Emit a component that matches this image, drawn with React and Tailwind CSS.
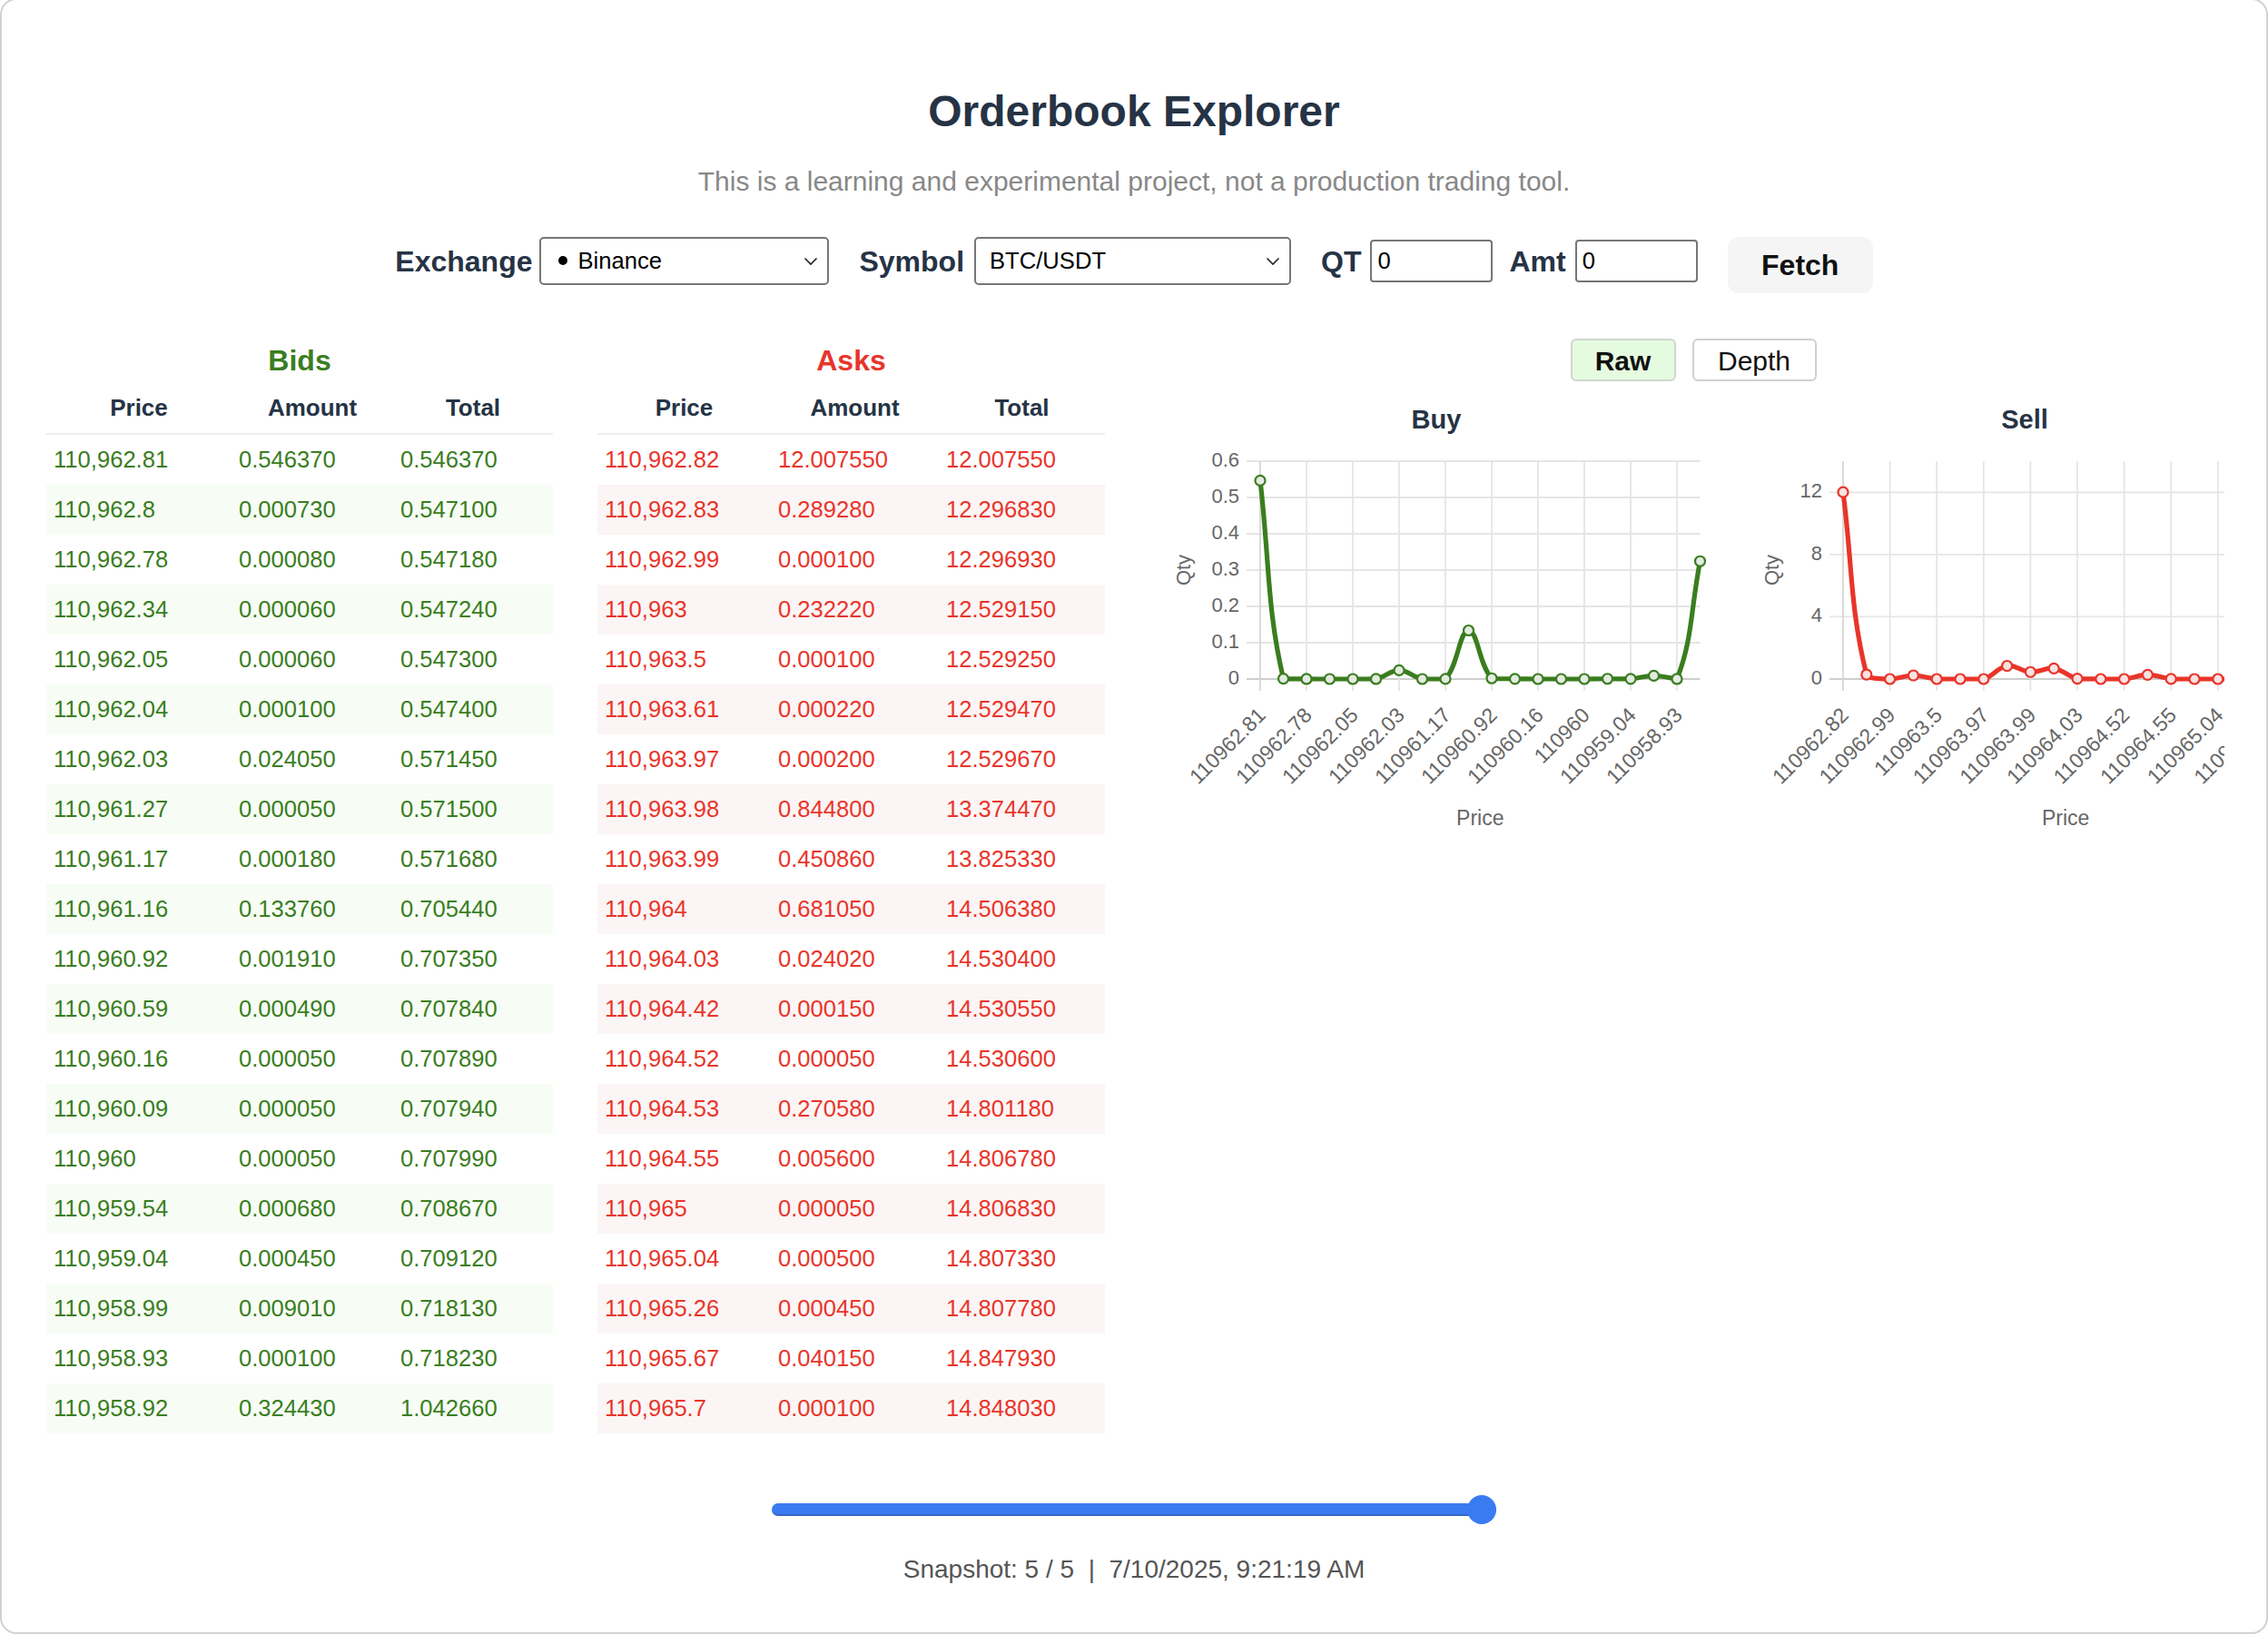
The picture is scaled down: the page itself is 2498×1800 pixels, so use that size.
import React from "react";

const bids = [
  ["110,962.81", "0.546370", "0.546370"],
  ["110,962.8", "0.000730", "0.547100"],
  ["110,962.78", "0.000080", "0.547180"],
  ["110,962.34", "0.000060", "0.547240"],
  ["110,962.05", "0.000060", "0.547300"],
  ["110,962.04", "0.000100", "0.547400"],
  ["110,962.03", "0.024050", "0.571450"],
  ["110,961.27", "0.000050", "0.571500"],
  ["110,961.17", "0.000180", "0.571680"],
  ["110,961.16", "0.133760", "0.705440"],
  ["110,960.92", "0.001910", "0.707350"],
  ["110,960.59", "0.000490", "0.707840"],
  ["110,960.16", "0.000050", "0.707890"],
  ["110,960.09", "0.000050", "0.707940"],
  ["110,960", "0.000050", "0.707990"],
  ["110,959.54", "0.000680", "0.708670"],
  ["110,959.04", "0.000450", "0.709120"],
  ["110,958.99", "0.009010", "0.718130"],
  ["110,958.93", "0.000100", "0.718230"],
  ["110,958.92", "0.324430", "1.042660"],
];

const asks = [
  ["110,962.82", "12.007550", "12.007550"],
  ["110,962.83", "0.289280", "12.296830"],
  ["110,962.99", "0.000100", "12.296930"],
  ["110,963", "0.232220", "12.529150"],
  ["110,963.5", "0.000100", "12.529250"],
  ["110,963.61", "0.000220", "12.529470"],
  ["110,963.97", "0.000200", "12.529670"],
  ["110,963.98", "0.844800", "13.374470"],
  ["110,963.99", "0.450860", "13.825330"],
  ["110,964", "0.681050", "14.506380"],
  ["110,964.03", "0.024020", "14.530400"],
  ["110,964.42", "0.000150", "14.530550"],
  ["110,964.52", "0.000050", "14.530600"],
  ["110,964.53", "0.270580", "14.801180"],
  ["110,964.55", "0.005600", "14.806780"],
  ["110,965", "0.000050", "14.806830"],
  ["110,965.04", "0.000500", "14.807330"],
  ["110,965.26", "0.000450", "14.807780"],
  ["110,965.67", "0.040150", "14.847930"],
  ["110,965.7", "0.000100", "14.848030"],
];

const bidCols = ["w-[204px]", "w-[178px]", "w-[176px]"];
const askCols = ["w-[191px]", "w-[185px]", "w-[183px]"];

function Book({ title, rows, cols, side }) {
  const isBid = side === "bid";
  const txt = isBid ? "text-[#3a7d22]" : "text-[#e8352b]";
  const tint = isBid ? "bg-[#f7fdf5]" : "bg-[#fcf5f5]";
  return (
    <div className="flex flex-col">
      <div className={`h-[49px] pb-[6px] flex items-center justify-center text-[32px] font-bold ${txt}`}>
        {title}
      </div>
      <div className="flex h-[55px] pb-[2px] items-center border-b-2 border-[#ededed] text-[26px] font-bold text-[#263345]">
        {["Price", "Amount", "Total"].map((h, i) => (
          <div key={h} className={`${cols[i]} text-center`}>
            {h}
          </div>
        ))}
      </div>
      {rows.map((r, ri) => (
        <div
          key={ri}
          className={`flex h-[55px] items-center text-[25.6px] ${txt} ${ri % 2 === 1 ? tint : "bg-white"}`}
        >
          {r.map((c, ci) => (
            <div key={ci} className={`${cols[ci]} pl-[8px]`}>
              {c}
            </div>
          ))}
        </div>
      ))}
    </div>
  );
}

function buildPath(pts, tension, top, bottom) {
  const clampY = (y) => Math.min(bottom, Math.max(top, y));
  const cps = pts.map((p, i) => {
    const prev = pts[i - 1] || p;
    const next = pts[i + 1] || p;
    const d01 = Math.hypot(p.x - prev.x, p.y - prev.y);
    const d12 = Math.hypot(next.x - p.x, next.y - p.y);
    let s01 = d01 / (d01 + d12);
    let s12 = d12 / (d01 + d12);
    if (!isFinite(s01)) s01 = 0;
    if (!isFinite(s12)) s12 = 0;
    const fa = tension * s01;
    const fb = tension * s12;
    return {
      px: p.x - fa * (next.x - prev.x),
      py: clampY(p.y - fa * (next.y - prev.y)),
      nx: p.x + fb * (next.x - prev.x),
      ny: clampY(p.y + fb * (next.y - prev.y)),
    };
  });
  let d = `M${pts[0].x},${pts[0].y}`;
  for (let i = 1; i < pts.length; i++) {
    d += ` C${cps[i - 1].nx},${cps[i - 1].ny} ${cps[i].px},${cps[i].py} ${pts[i].x},${pts[i].y}`;
  }
  return d;
}

function Chart({ title, values, labels, max, ticks, tickFmt, x0, dx, color, fill }) {
  const top = 27;
  const zero = 267;
  const h = 240;
  const y = (v) => zero - (v / max) * h;
  const pts = values.map((v, i) => ({ x: x0 + i * dx, y: y(v) }));
  const xEnd = x0 + (values.length - 1) * dx;
  const path = buildPath(pts, 0.4, top, zero);
  return (
    <div className="w-[584px] shrink-0 flex flex-col">
      <div className="h-[36px] flex items-center justify-center text-[29px] font-bold text-[#263345]">
        {title}
      </div>
      <svg width="584" height="440" className="block overflow-visible">
        {ticks.map((t) => (
          <line
            key={"h" + t}
            x1={x0 - 15}
            x2={xEnd}
            y1={y(t)}
            y2={y(t)}
            stroke={t === 0 ? "#cdcdcd" : "#e5e5e5"}
            strokeWidth="1.8"
          />
        ))}
        {values.map((_, i) =>
          i % 2 === 0 ? (
            <line
              key={"v" + i}
              x1={x0 + i * dx}
              x2={x0 + i * dx}
              y1={top}
              y2={zero + 13}
              stroke={i === 0 ? "#d6d6d6" : "#e5e5e5"}
              strokeWidth="1.8"
            />
          ) : null
        )}
        {ticks.map((t) => (
          <text
            key={"t" + t}
            x={x0 - 23}
            y={y(t)}
            textAnchor="end"
            dominantBaseline="middle"
            fontSize="22"
            fill="#666"
          >
            {tickFmt(t)}
          </text>
        ))}
        {values.map((_, i) =>
          i % 2 === 0 ? (
            <text
              key={"l" + i}
              transform={`translate(${x0 + i * dx + 3},${zero + 37}) rotate(-45)`}
              textAnchor="end"
              dominantBaseline="middle"
              fontSize="23"
              fill="#666"
            >
              {labels[i]}
            </text>
          ) : null
        )}
        <text
          transform={`translate(15,${(top + zero) / 2}) rotate(-90)`}
          textAnchor="middle"
          dominantBaseline="middle"
          fontSize="22"
          fill="#666"
        >
          Qty
        </text>
        <text
          x={(x0 + xEnd) / 2}
          y={422}
          textAnchor="middle"
          dominantBaseline="middle"
          fontSize="23"
          fill="#666"
        >
          Price
        </text>
        <path d={path} fill="none" stroke={color} strokeWidth="5.2" strokeLinejoin="round" />
        {pts.map((p, i) => (
          <circle key={"c" + i} cx={p.x} cy={p.y} r="5.5" fill={fill} stroke={color} strokeWidth="2.2" />
        ))}
      </svg>
    </div>
  );
}

function Chevron() {
  return (
    <svg width="16" height="10" viewBox="0 0 16 10" className="block">
      <path d="M1.5 1.5 L8 8 L14.5 1.5" fill="none" stroke="#222" strokeWidth="1.6" />
    </svg>
  );
}

export default function App() {
  const bidQty = bids.map((r) => parseFloat(r[1]));
  const askQty = asks.map((r) => parseFloat(r[1]));
  const bidLabels = bids.map((r) => r[0].replace(",", ""));
  const askLabels = asks.map((r) => r[0].replace(",", ""));
  return (
    <div className="w-[2498px] h-[1800px] overflow-hidden bg-white font-['Liberation_Sans',Arial,Helvetica,sans-serif] text-[#263345]">
      <div className="-mt-[2px] h-[1802px] rounded-[18px] border-2 border-[#d2d2d2] flex flex-col items-center">
        <div className="mt-[93px] h-[60px] flex items-center text-[48px] font-bold text-[#263345]">
          Orderbook Explorer
        </div>
        <div className="mt-[28px] h-[36px] flex items-center text-[30px] text-[#888888]">
          This is a learning and experimental project, not a production trading tool.
        </div>

        <div className="mt-[44px] flex items-start">
          <div className="h-[53px] flex items-center text-[32px] font-bold">Exchange</div>
          <div className="ml-[8px] w-[319px] h-[53px] border-2 border-[#767676] rounded-[5px] flex items-center justify-between pl-[19px] pr-[10px] text-[25.6px] text-black">
            <span className="flex items-center">
              <span className="inline-block w-[10px] h-[10px] rounded-full bg-black mr-[11px]" />
              Binance
            </span>
            <Chevron />
          </div>
          <div className="ml-[33px] h-[53px] flex items-center text-[32px] font-bold">Symbol</div>
          <div className="ml-[11px] w-[349px] h-[53px] border-2 border-[#767676] rounded-[5px] flex items-center justify-between pl-[15px] pr-[10px] text-[25.6px] text-black">
            <span>BTC/USDT</span>
            <Chevron />
          </div>
          <div className="ml-[33px] h-[53px] flex items-center text-[32px] font-bold">QT</div>
          <input
            readOnly
            defaultValue="0"
            className="ml-[10px] mt-[3px] w-[135px] h-[47px] border-2 border-[#767676] rounded-[4px] pl-[6px] text-[25.6px] text-black outline-none"
          />
          <div className="ml-[18px] h-[53px] flex items-center text-[32px] font-bold">Amt</div>
          <input
            readOnly
            defaultValue="0"
            className="ml-[10px] mt-[3px] w-[135px] h-[47px] border-2 border-[#767676] rounded-[4px] pl-[6px] text-[25.6px] text-black outline-none"
          />
          <button className="ml-[33px] w-[160px] h-[62px] rounded-[12px] bg-[#f5f5f5] text-[32px] font-bold text-[#111]">
            Fetch
          </button>
        </div>

        <div className="mt-[52px] w-full flex items-start pl-[49px]">
          <Book title="Bids" rows={bids} cols={bidCols} side="bid" />
          <div className="ml-[49px]">
            <Book title="Asks" rows={asks} cols={askCols} side="ask" />
          </div>
          <div className="ml-[33px] -mt-[2px] w-[1230px] flex flex-col">
            <div className="flex justify-center gap-[18px]">
              <button className="w-[116px] h-[47px] rounded-[6px] border-2 border-[#cfd6cc] bg-[#e5fbe0] text-[30px] font-bold text-[#111]">
                Raw
              </button>
              <button className="w-[137px] h-[47px] rounded-[6px] border-2 border-[#d0d0d0] bg-white text-[30px] text-[#111]">
                Depth
              </button>
            </div>
            <div className="mt-[25px] ml-[40px] w-[1160px] overflow-hidden flex gap-[64px]">
              <Chart
                title="Buy"
                values={bidQty}
                labels={bidLabels}
                max={0.6}
                ticks={[0, 0.1, 0.2, 0.3, 0.4, 0.5, 0.6]}
                tickFmt={(t) => (t === 0 ? "0" : t.toFixed(1))}
                x0={98}
                dx={25.5}
                color="#3a7d1f"
                fill="#e4eae1"
              />
              <Chart
                title="Sell"
                values={askQty}
                labels={askLabels}
                max={14}
                ticks={[0, 4, 8, 12]}
                tickFmt={(t) => String(t)}
                x0={92}
                dx={25.8}
                color="#e8352a"
                fill="#f7e3e1"
              />
            </div>
          </div>
        </div>

        <div className="mt-[68px] w-[798px] h-[32px] relative flex items-center">
          <div className="w-full h-[14px] rounded-full bg-[#3a7bf2] border-b-2 border-[#3566c4]" />
          <div className="absolute right-0 top-0 w-[32px] h-[32px] rounded-full bg-[#3a7bf2]" />
        </div>
        <div className="mt-[34px] h-[32px] flex items-center text-[28px] text-[#555555]">
          Snapshot: 5 / 5&nbsp;&nbsp;|&nbsp;&nbsp;7/10/2025, 9:21:19 AM
        </div>
      </div>
    </div>
  );
}
